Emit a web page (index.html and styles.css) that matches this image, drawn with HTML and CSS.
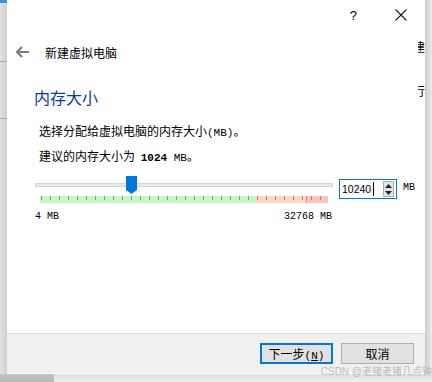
FILE: index.html
```html
<!DOCTYPE html>
<html lang="zh-CN">
  <head>
    <meta charset="UTF-8" />
    <meta name="viewport" content="width=device-width, initial-scale=1.0" />
    <title>新建虚拟电脑</title>
    <link rel="stylesheet" href="styles.css">
  </head>
  <body>
    <div class="screen">
      <div class="left-strip">
        <div class="left-cap"></div>
        <div class="left-line one"></div>
        <div class="left-line two"></div>
      </div>

      <div class="dialog">
        <div class="titlebar">
          <span class="help">?</span>
          <svg class="close" width="12" height="12" viewBox="0 0 12 12">
            <path d="M0.5 0.5 L11.5 11.5 M11.5 0.5 L0.5 11.5" stroke="#1a1a1a" stroke-width="1.1" fill="none" />
          </svg>
        </div>

        <div class="nav">
          <svg class="back" width="13" height="12" viewBox="0 0 13 12">
            <path d="M6 1 L1 6 L6 11 M1 6 H13" stroke="#7a7a7a" stroke-width="2" fill="none" />
          </svg>
          <span>新建虚拟电脑</span>
        </div>

        <div class="page">
          <h2 class="page-title">内存大小</h2>
          <p class="line">选择分配给虚拟电脑的内存大小<span class="lat">(MB)</span>。</p>
          <p class="line">建议的内存大小为 <b class="lat">1024</b><span class="lat"> MB</span>。</p>

          <div class="mem-row">
            <div class="slider">
              <div class="track">
                <div class="thumb"></div>
              </div>
              <div class="scale">
                <div class="zone ok"></div>
                <div class="zone warn"></div>
                <div class="zone bad"></div>
                <div class="ticks"></div>
              </div>
              <div class="scale-labels">
                <span>4 MB</span>
                <span>32768 MB</span>
              </div>
            </div>

            <div class="spin">
              <span class="spin-value">10240</span>
              <span class="caret"></span>
              <div class="spin-btns">
                <svg width="7" height="4" viewBox="0 0 7 4"><path d="M0 4 L3.5 0 L7 4 Z" fill="#222" /></svg>
                <svg width="7" height="4" viewBox="0 0 7 4"><path d="M0 0 L3.5 4 L7 0 Z" fill="#222" /></svg>
              </div>
            </div>
            <span class="unit">MB</span>
          </div>
        </div>

        <div class="footer">
          <button class="btn default">下一步<span class="lat">(<u>N</u>)</span></button>
          <button class="btn">取消</button>
        </div>

        <div class="behind">
          <span class="frag one">建</span>
          <span class="frag two">行</span>
        </div>
      </div>

      <div class="right-strip"></div>
    </div>

    <div class="bottom-shadow">
      <div class="dark"></div>
      <div class="light"></div>
    </div>

    <div class="watermark">CSDN @老猪老猪几点钟</div>
  </body>
</html>
```

FILE: styles.css
```css
* {
  margin: 0;
  padding: 0;
  box-sizing: border-box;
}
body {
  width: 432px;
  height: 382px;
  overflow: hidden;
  position: relative;
  background: #e8e8e8;
  font-family: "Noto Sans CJK SC", "DejaVu Sans", sans-serif;
  font-size: 12px;
  color: #000;
}
.lat {
  font-family: "Liberation Mono", monospace;
}

.screen {
  display: flex;
  height: 374px;
}
.left-strip {
  width: 7px;
  position: relative;
  background: linear-gradient(to right, #e2e2e2, #cfcfcf);
}
.left-cap {
  height: 3px;
  background: #3d8fdc;
}
.left-line {
  position: absolute;
  left: 0;
  width: 7px;
  height: 1px;
  background: #a9a9a9;
}
.left-line.one {
  top: 61px;
}
.left-line.two {
  top: 118px;
}
.right-strip {
  width: 7px;
  background: linear-gradient(to right, #cbcbcb, #ececec);
}

.dialog {
  width: 418px;
  height: 374px;
  position: relative;
  display: flex;
  flex-direction: column;
  background: #fff;
}

/* title bar */
.titlebar {
  height: 30px;
  display: flex;
  align-items: center;
  justify-content: flex-end;
  padding-right: 18px;
}
.help {
  font-family: "Liberation Sans", sans-serif;
  font-size: 13px;
  margin-right: 38px;
}

/* wizard nav */
.nav {
  margin-top: 10px;
  height: 24px;
  display: flex;
  align-items: center;
  padding-left: 9px;
  gap: 16px;
}

/* page */
.page {
  padding-left: 27px;
}
.page-title {
  margin-top: 23px;
  height: 20px;
  line-height: 20px;
  font-size: 16px;
  font-weight: normal;
  color: #0a3aa0;
}
.line {
  margin-left: 5px;
  height: 16px;
  line-height: 16px;
}
.page-title + .line {
  margin-top: 16px;
}
.line + .line {
  margin-top: 9px;
}
.line b {
  font-size: 11.5px;
  margin-left: 3px;
}
.line .lat {
  font-size: 11px;
}

.mem-row {
  margin-top: 12px;
  margin-left: 1px;
  display: flex;
  align-items: flex-start;
}
.slider {
  width: 298px;
}
.track {
  margin-top: 7px;
  height: 4px;
  position: relative;
  background: #e9eaea;
  border: 1px solid #d4d4d4;
}
.thumb {
  position: absolute;
  left: 90px;
  top: -8px;
  width: 11px;
  height: 18px;
  background: #0078d7;
  clip-path: polygon(0 0, 100% 0, 100% 78%, 50% 100%, 0 78%);
}
.scale {
  margin: 9px 5px 0;
  height: 7px;
  display: flex;
  position: relative;
}
.zone.ok {
  width: 216px;
  background: #c4f8c4;
}
.zone.warn {
  width: 50px;
  background: #ffd6c4;
}
.zone.bad {
  flex: 1;
  background: #ffc2c2;
  border-left: 1px solid #f08a80;
}
.ticks {
  position: absolute;
  left: 1px;
  top: 0;
  right: 0;
  height: 4px;
  background: repeating-linear-gradient(to right, #9c8c88 0, #9c8c88 1px, transparent 1px, transparent 9px);
}
.scale-labels {
  margin-top: 7px;
  display: flex;
  justify-content: space-between;
  padding-right: 1px;
  font-family: "Liberation Mono", monospace;
  font-size: 10px;
  line-height: 13px;
}

.spin {
  margin-top: 3px;
  margin-left: 6px;
  width: 58px;
  height: 20px;
  border: 1px solid #0078d7;
  display: flex;
  align-items: center;
  padding-left: 2px;
}
.spin-value {
  font-family: "Liberation Sans", sans-serif;
  font-size: 10.5px;
}
.caret {
  width: 1px;
  height: 14px;
  background: #000;
  margin-left: 2px;
}
.spin-btns {
  margin-left: auto;
  margin-right: 2px;
  width: 11px;
  height: 16px;
  background: #e4e4e4;
  border: 1px solid #adadad;
  display: flex;
  flex-direction: column;
  align-items: center;
  justify-content: space-around;
}
.unit {
  margin-left: 6px;
  margin-top: 6px;
  font-family: "Liberation Mono", monospace;
  font-size: 10px;
}

/* footer */
.footer {
  margin-top: auto;
  height: 41px;
  background: #f0f0f0;
  border-top: 1px solid #dcdcdc;
  border-bottom: 1px solid #fff;
  display: flex;
  justify-content: flex-end;
  align-items: flex-start;
  gap: 8px;
  padding: 9px 11px 0 0;
}
.btn {
  width: 73px;
  height: 21px;
  background: #e1e1e1;
  border: 1px solid #adadad;
  font-family: "Noto Sans CJK SC", sans-serif;
  font-size: 12px;
  color: #000;
}
.btn.default {
  border: 2px solid #0078d7;
}
.btn .lat {
  font-size: 11px;
}

/* window behind the dialog, mostly covered */
.behind {
  position: absolute;
  right: 0;
  top: 0;
  width: 7px;
  height: 120px;
  overflow: hidden;
  background: #fff;
}
.frag {
  position: absolute;
  left: -5px;
  font-size: 12px;
}
.frag.one {
  top: 38px;
}
.frag.two {
  top: 82px;
}

.bottom-shadow {
  display: flex;
  height: 8px;
}
.bottom-shadow .dark {
  width: 54px;
  background: linear-gradient(#c4c4c4, #b5b5b5);
}
.bottom-shadow .light {
  flex: 1;
  background: linear-gradient(#dedede, #eeeeee);
}

.watermark {
  position: absolute;
  right: 0;
  bottom: 4px;
  font-size: 10px;
  line-height: 12px;
  color: rgba(170, 170, 170, 0.75);
  font-family: "Liberation Sans", "Noto Sans CJK SC", sans-serif;
}
```
